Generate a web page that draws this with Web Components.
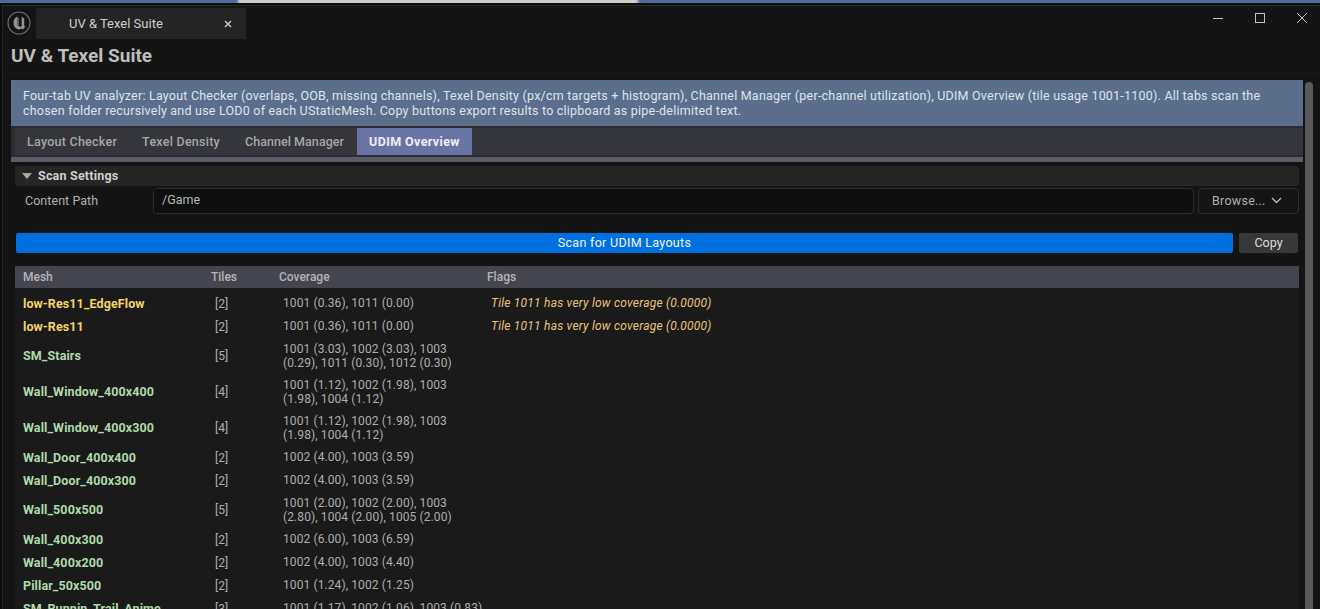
<!DOCTYPE html>
<html><head><meta charset="utf-8">
<style>
html,body{margin:0;padding:0;background:#141414;overflow:hidden}
body{width:1320px;height:609px;font-family:Roboto,"Liberation Sans",sans-serif;font-size:12px}
</style></head><body>
<ue-window>
  <ue-titlebar slot="title" label="UV &amp; Texel Suite"></ue-titlebar>
  <ue-info>Four-tab UV analyzer: Layout Checker (overlaps, OOB, missing channels), Texel Density (px/cm targets + histogram), Channel Manager (per-channel utilization), UDIM Overview (tile usage 1001-1100). All tabs scan the chosen folder recursively and use LOD0 of each UStaticMesh. Copy buttons export results to clipboard as pipe-delimited text.</ue-info>
  <ue-tabs active="3" tabs="Layout Checker|Texel Density|Channel Manager|UDIM Overview"></ue-tabs>
  <ue-settings></ue-settings>
  <ue-actions></ue-actions>
  <ue-table>
    <ue-row kind="warn" mesh="low-Res11_EdgeFlow" tiles="[2]" cov="1001 (0.36), 1011 (0.00)" flags="Tile 1011 has very low coverage (0.0000)"></ue-row>
    <ue-row kind="warn" mesh="low-Res11" tiles="[2]" cov="1001 (0.36), 1011 (0.00)" flags="Tile 1011 has very low coverage (0.0000)"></ue-row>
    <ue-row mesh="SM_Stairs" tiles="[5]" cov="1001 (3.03), 1002 (3.03), 1003 (0.29), 1011 (0.30), 1012 (0.30)"></ue-row>
    <ue-row mesh="Wall_Window_400x400" tiles="[4]" cov="1001 (1.12), 1002 (1.98), 1003 (1.98), 1004 (1.12)"></ue-row>
    <ue-row mesh="Wall_Window_400x300" tiles="[4]" cov="1001 (1.12), 1002 (1.98), 1003 (1.98), 1004 (1.12)"></ue-row>
    <ue-row mesh="Wall_Door_400x400" tiles="[2]" cov="1002 (4.00), 1003 (3.59)"></ue-row>
    <ue-row mesh="Wall_Door_400x300" tiles="[2]" cov="1002 (4.00), 1003 (3.59)"></ue-row>
    <ue-row mesh="Wall_500x500" tiles="[5]" cov="1001 (2.00), 1002 (2.00), 1003 (2.80), 1004 (2.00), 1005 (2.00)"></ue-row>
    <ue-row mesh="Wall_400x300" tiles="[2]" cov="1002 (6.00), 1003 (6.59)"></ue-row>
    <ue-row mesh="Wall_400x200" tiles="[2]" cov="1002 (4.00), 1003 (4.40)"></ue-row>
    <ue-row mesh="Pillar_50x500" tiles="[2]" cov="1001 (1.24), 1002 (1.25)"></ue-row>
    <ue-row mesh="SM_Runnin_Trail_Anime" tiles="[3]" cov="1001 (1.17), 1002 (1.06), 1003 (0.83)"></ue-row>
  </ue-table>
</ue-window>
<script>
function def(name, css, html){
  customElements.define(name, class extends HTMLElement{
    connectedCallback(){
      if(this.shadowRoot) return;
      const r=this.attachShadow({mode:'open'});
      const a=n=>(this.getAttribute(n)||'');
      r.innerHTML='<style>'+css+'</style>'+(typeof html==='function'?html(a):html);
    }
  });
}
const esc=s=>s.replace(/&/g,'&amp;').replace(/</g,'&lt;');

def('ue-window',`
:host{display:flex;flex-direction:column;width:1320px;height:609px;overflow:hidden;
  background:linear-gradient(90deg,#4a6d9e 0,#4a6d9e 236px,#cfcbc5 240px,#cfcbc5 636px,#4a6d9e 640px)}
.frame{margin-top:3px;flex:1;min-height:0;background:#0c0c0c;padding:2px 0 0 2px;display:flex;flex-direction:column}
.inner{flex:1;min-height:0;background:#141414;border-top:1px solid #2a2a2a;border-left:1px solid #262626;display:flex;flex-direction:column}
.body{flex:1;min-height:0;display:flex;padding:6px 0 0 8px;gap:2px}
.main{width:1292px;display:flex;flex-direction:column;min-height:0}
.scroll{width:8px;margin-top:2px;margin-bottom:-20px;background:#5a5a5a;border-radius:4px 4px 0 0}
`,`<div class="frame"><div class="inner"><slot name="title"></slot>
<div class="body"><div class="main"><slot></slot></div><div class="scroll"></div></div></div></div>`);

def('ue-titlebar',`
:host{display:block;flex:none;color:#c8c8c8;border-bottom:1px solid #1a1a1a}
.bar{display:flex;align-items:flex-start;height:34px}
.logo{width:24px;height:24px;margin:5px 0 0 4px;flex:none}
.tab{width:210px;height:31px;margin:2px 0 0 5px;background:#242424;border-radius:3px 3px 0 0;display:flex;align-items:center;box-sizing:border-box;padding:0 14px 0 33px;font-size:13px;color:#cfcfcf;justify-content:space-between}
.x{width:8px;height:8px}
.win{margin-left:auto;display:flex;gap:30px;height:24px;align-items:center;padding-right:12px}
.win svg{display:block}
h1{margin:0;font-size:19px;font-weight:700;color:#bdbdbd;line-height:24px;padding:4px 0 5px 8px}
`,a=>`<div class="bar">
<svg class="logo" viewBox="0 0 24 24"><circle cx="12" cy="12" r="11" fill="#141414" stroke="#6e6e6e" stroke-width="1.1"/><path d="M10.4 5.6C8 6.6 6.5 8.6 6.5 11.5c0 4 2.5 6.9 5.5 6.9 1 0 1.8-.4 2.5-1l1.3 1.1 2.9-2.9-1.5-.4V7.8c-.6-.8-1.4-1.5-2.6-2v.9l.1 8.3-1.4 1-1.3-.7V6.9l-1.3-.2-.3.2z" fill="#949494"/><path d="M11 6.9v8" stroke="#141414" stroke-width=".8" fill="none"/></svg>
<div class="tab"><span>${esc(a('label'))}</span><svg class="x" viewBox="0 0 8 8"><path d="M1 1l6 6M7 1L1 7" stroke="#c4c4c4" stroke-width="1.5"/></svg></div>
<div class="win">
<svg width="12" height="12" viewBox="0 0 12 12"><path d="M1 6.5h10" stroke="#c4c4c4" fill="none"/></svg>
<svg width="12" height="12" viewBox="0 0 12 12"><rect x="1.5" y="1.5" width="9" height="9" stroke="#c4c4c4" fill="none"/></svg>
<svg width="12" height="12" viewBox="0 0 12 12"><path d="M1 1l10 10M11 1L1 11" stroke="#c4c4c4" fill="none"/></svg>
</div></div><h1>${esc(a('label'))}</h1>`);

def('ue-info',`
:host{display:block;flex:none;background:#5b6e8c;color:#dfe3ea;padding:8px 30px 8px 12px;font-size:12.5px;line-height:15px;height:30px;letter-spacing:.215px}
`,`<slot></slot>`);

const tabLS=[.25,.25,.05,.38];
def('ue-tabs',`
:host{display:block;flex:none;background:#2c2c31;padding:2px 0 0 4px}
.row{display:flex;background:#35363c;height:27px;gap:1px}
.t{padding:0 12px;display:flex;align-items:center;font-weight:500;font-size:12.5px;color:#a6a6a6}
.t.on{background:#6a74a4;color:#eef0f6;font-weight:700}
.strip{height:5px;margin:2px 0 0 -4px;background:#5b5b6a}
`,a=>{const on=+a('active');return '<div class="row">'+a('tabs').split('|').map((t,i)=>`<div class="t${i==on?' on':''}" style="letter-spacing:${tabLS[i]}px">${esc(t)}</div>`).join('')+'</div><div class="strip"></div>'});

def('ue-settings',`
:host{display:block;flex:none;padding:4px 4px 0 4px;color:#c0c0c0}
.head{height:19px;padding-bottom:1px;background:#252525;border-radius:3px;display:flex;align-items:center;gap:6px;padding-left:7px;font-weight:700;font-size:12.5px;color:#cfcfcf;letter-spacing:.2px}
.tri{width:0;height:0;border-left:5px solid transparent;border-right:5px solid transparent;border-top:6px solid #a8a8a8}
.row{display:flex;align-items:center;height:26px;margin-top:2px;gap:4px}
.lab{padding:0 0 2px 10px;flex:none;width:124px;font-size:12.5px;color:#b0b0b0;letter-spacing:.05px}
.in{flex:1;height:26px;box-sizing:border-box;background:#0e0e0e;border:1px solid #2c2c2c;border-radius:4px;padding:0 8px 3px;display:flex;align-items:center;font-size:12.5px;color:#b8b8b8}
.br{width:101px;height:26px;box-sizing:border-box;background:#151515;border:1px solid #2e2e2e;border-radius:4px;display:flex;align-items:center;gap:5px;padding:0 0 1px 13px;font-size:12.5px;color:#b0b0b0;letter-spacing:.25px}
`,`<div class="head"><span class="tri"></span><span>Scan Settings</span></div>
<div class="row"><span class="lab">Content Path</span><div class="in">/Game</div>
<div class="br"><span>Browse...</span><svg width="11" height="7" viewBox="0 0 11 7"><path d="M1 1l4.5 4.5L10 1" stroke="#b8b8b8" stroke-width="1.4" fill="none"/></svg></div></div>`);

def('ue-actions',`
:host{display:flex;flex:none;gap:6px;padding:19px 5px 0 5px}
.scan,.copy{height:19px;padding-bottom:1px;border-radius:2px;display:flex;align-items:center;justify-content:center;font-size:12.5px}
.scan{flex:1;background:#0070e0;color:#f0f6ff;letter-spacing:.3px}
.copy{width:59px;background:#383838;color:#dcdcdc}
`,`<div class="scan">Scan for UDIM Layouts</div><div class="copy">Copy</div>`);

const cols='grid-template-columns:188px 68px 213px 1fr;';
def('ue-table',`
:host{display:block;flex:none;margin:13px 4px 0 4px;background:#1a1a1a}
.h{display:grid;grid-template-columns:188px 68px 208px 1fr;height:22px;background:#454550;align-items:center;font-size:12px;font-weight:500;color:#b4b4b8}
.h span{padding-left:8px}
.b{padding-top:4px;height:340px;overflow:hidden}
`,`<div class="h"><span>Mesh</span><span>Tiles</span><span>Coverage</span><span>Flags</span></div><div class="b"><slot></slot></div>`);

def('ue-row',`
:host{display:grid;${cols}align-items:center;font-size:12px;line-height:14px;color:#aeaeae;min-height:23px}
.t{padding-left:12px}
.v{padding:3.625px 0 4.375px 12px;letter-spacing:.1px}
.m{font-weight:700;color:#aedaa9;padding-left:8px;white-space:nowrap;font-size:12.5px;letter-spacing:.1px}
:host([kind=warn]) .m{color:#f4d56a}
.f{font-style:italic;color:#e8c57c;white-space:nowrap;padding:0 0 2px 7px;letter-spacing:.22px}
`,a=>`<div class="m">${esc(a('mesh'))}</div><div class="t">${esc(a('tiles'))}</div><div class="v">${esc(a('cov'))}</div><div class="f">${esc(a('flags'))}</div>`);
</script>
</body></html>
